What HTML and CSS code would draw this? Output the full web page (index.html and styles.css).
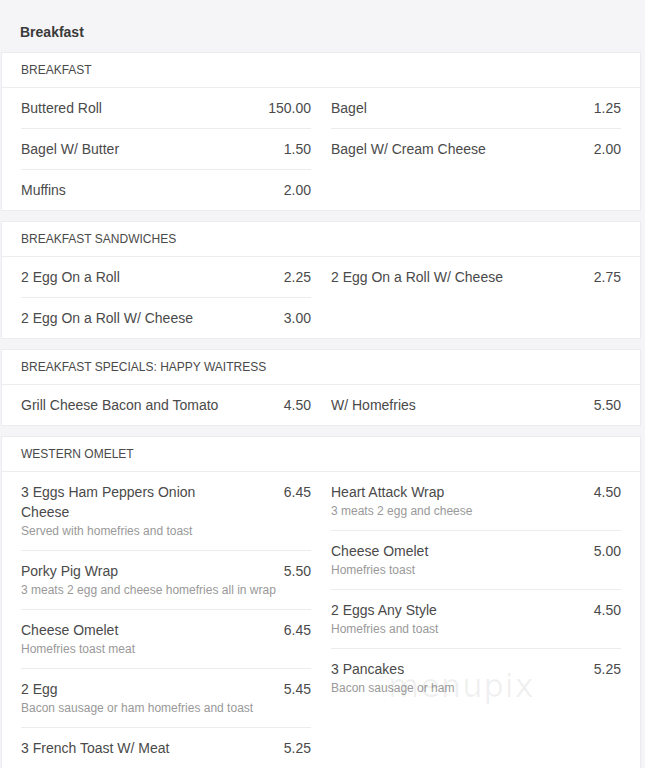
FILE: index.html
```html
<!DOCTYPE html>
<html>
<head>
<meta charset="utf-8">
<link rel="stylesheet" href="styles.css">
</head>
<body>
<div class="page">
  <div class="menu-head">Breakfast</div>

  <section class="card">
    <div class="card-title">BREAKFAST</div>
    <div class="cols">
      <div class="col">
        <div class="item"><div class="line"><span class="name">Buttered Roll</span><span class="price">150.00</span></div></div>
        <div class="item"><div class="line"><span class="name">Bagel W/ Butter</span><span class="price">1.50</span></div></div>
        <div class="item"><div class="line"><span class="name">Muffins</span><span class="price">2.00</span></div></div>
      </div>
      <div class="col">
        <div class="item"><div class="line"><span class="name">Bagel</span><span class="price">1.25</span></div></div>
        <div class="item"><div class="line"><span class="name">Bagel W/ Cream Cheese</span><span class="price">2.00</span></div></div>
      </div>
    </div>
  </section>

  <section class="card">
    <div class="card-title">BREAKFAST SANDWICHES</div>
    <div class="cols">
      <div class="col">
        <div class="item"><div class="line"><span class="name">2 Egg On a Roll</span><span class="price">2.25</span></div></div>
        <div class="item"><div class="line"><span class="name">2 Egg On a Roll W/ Cheese</span><span class="price">3.00</span></div></div>
      </div>
      <div class="col">
        <div class="item"><div class="line"><span class="name">2 Egg On a Roll W/ Cheese</span><span class="price">2.75</span></div></div>
      </div>
    </div>
  </section>

  <section class="card">
    <div class="card-title">BREAKFAST SPECIALS: HAPPY WAITRESS</div>
    <div class="cols">
      <div class="col">
        <div class="item"><div class="line"><span class="name">Grill Cheese Bacon and Tomato</span><span class="price">4.50</span></div></div>
      </div>
      <div class="col">
        <div class="item"><div class="line"><span class="name">W/ Homefries</span><span class="price">5.50</span></div></div>
      </div>
    </div>
  </section>

  <section class="card">
    <div class="card-title">WESTERN OMELET</div>
    <div class="cols">
      <div class="col">
        <div class="item"><div class="line"><span class="name">3 Eggs Ham Peppers Onion Cheese</span><span class="price">6.45</span></div><div class="desc">Served with homefries and toast</div></div>
        <div class="item"><div class="line"><span class="name">Porky Pig Wrap</span><span class="price">5.50</span></div><div class="desc">3 meats 2 egg and cheese homefries all in wrap</div></div>
        <div class="item"><div class="line"><span class="name">Cheese Omelet</span><span class="price">6.45</span></div><div class="desc">Homefries toast meat</div></div>
        <div class="item"><div class="line"><span class="name">2 Egg</span><span class="price">5.45</span></div><div class="desc">Bacon sausage or ham homefries and toast</div></div>
        <div class="item"><div class="line"><span class="name">3 French Toast W/ Meat</span><span class="price">5.25</span></div></div>
      </div>
      <div class="col">
        <div class="item"><div class="line"><span class="name">Heart Attack Wrap</span><span class="price">4.50</span></div><div class="desc">3 meats 2 egg and cheese</div></div>
        <div class="item"><div class="line"><span class="name">Cheese Omelet</span><span class="price">5.00</span></div><div class="desc">Homefries toast</div></div>
        <div class="item"><div class="line"><span class="name">2 Eggs Any Style</span><span class="price">4.50</span></div><div class="desc">Homefries and toast</div></div>
        <div class="item"><div class="line"><span class="name">3 Pancakes</span><span class="price">5.25</span></div><div class="desc">Bacon sausage or ham</div></div>
      </div>
    </div>
    <div class="watermark">menupix</div>
  </section>
</div>
</body>
</html>
```

FILE: styles.css
```css
html, body {
  margin: 0;
  padding: 0;
  background: #f5f5f8;
}
body {
  font-family: "Liberation Sans", Arial, sans-serif;
  color: #4a4a4a;
}
.page {
  padding: 0 4px 0 1px;
}
.menu-head {
  font-size: 14px;
  font-weight: bold;
  color: #3a3a3a;
  line-height: 20px;
  padding: 22px 19px 10px;
}
.card {
  position: relative;
  background: #fff;
  border: 1px solid #ececf0;
  padding: 0 19px;
  margin-bottom: 10px;
}
.card-title {
  font-size: 12px;
  line-height: 18px;
  padding: 8px 0 8px 19px;
  color: #4a4a4a;
  border-bottom: 1px solid #ececf0;
  margin: 0 -19px;
}
.cols {
  display: flex;
  gap: 20px;
}
.col {
  flex: 1 1 0;
  min-width: 0;
}
.item {
  padding: 10px 0;
  border-bottom: 1px solid #ececf0;
}
.item:last-child {
  border-bottom: none;
}
.line {
  display: flex;
  justify-content: space-between;
  gap: 20px;
  font-size: 14px;
  line-height: 20px;
  color: #4a4a4a;
}
.name {
  max-width: 70%;
}
.price {
  flex: none;
}
.desc {
  font-size: 12px;
  line-height: 18px;
  color: #999;
}
.watermark {
  position: absolute;
  left: 386px;
  top: 230px;
  font-size: 32px;
  letter-spacing: 1px;
  color: rgba(0, 0, 0, 0.06);
  font-family: "DejaVu Sans", sans-serif;
  pointer-events: none;
}
```
